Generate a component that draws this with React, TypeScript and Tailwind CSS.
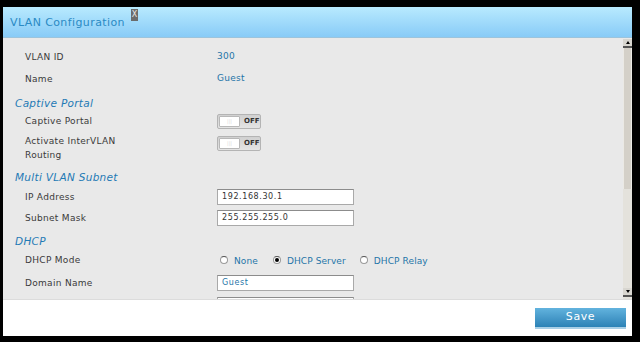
import React from "react";

const font = { fontFamily: '"DejaVu Sans", Verdana, sans-serif' };

const Label: React.FC<{ children: React.ReactNode }> = ({ children }) => (
  <div className="w-[192px] shrink-0 text-[9px] leading-[14px] tracking-[0.3px] text-[#3a3a3a]">{children}</div>
);

const Heading: React.FC<{ children: React.ReactNode; cls: string }> = ({ children, cls }) => (
  <div className={`${cls} flex items-center pl-[12px] text-[10.5px] italic tracking-[0.3px] text-[#1f7ab5]`}>{children}</div>
);

const Toggle: React.FC = () => (
  <div className="flex h-[15px] w-[44px] items-center rounded-[2px] border border-[#b4b4b4] bg-gradient-to-b from-[#d0d0d0] to-[#e4e4e4]">
    <div className="ml-[1px] flex h-[11px] w-[21px] items-center justify-center rounded-[1px] border border-[#b8b8b8] bg-white">
      <span className="text-[5px] leading-none text-[#d8d8d8]">|||</span>
    </div>
    <span className="ml-[4px] text-[7px] font-bold leading-none text-[#333]">OFF</span>
  </div>
);

const Input: React.FC<{ value?: string; blue?: boolean }> = ({ value, blue }) => (
  <div
    className={`flex h-[16px] w-[137px] items-center border border-[#a9a9a9] border-t-[#8c8c8c] bg-white pl-[4px] text-[8px] tracking-[0.6px] ${
      blue ? "text-[#1f75a8]" : "text-[#333]"
    }`}
  >
    {value}
  </div>
);

const Radio: React.FC<{ checked?: boolean; label: string }> = ({ checked, label }) => (
  <div className="flex items-center">
    <div className="flex h-[8px] w-[8px] items-center justify-center rounded-full border border-[#9a9a9a] border-t-[#555] bg-white">
      {checked && <div className="h-[4px] w-[4px] rounded-full bg-black" />}
    </div>
    <span className="ml-[6px] mt-[3px] text-[9px] tracking-[0.1px] text-[#1f75a8]">{label}</span>
  </div>
);

export default function App() {
  return (
    <div className="h-[342px] w-[640px] bg-black pl-[3px] pt-[7px]" style={font}>
      <div className="flex h-[329px] w-[629px] flex-col bg-white">
        {/* header */}
        <div className="flex h-[31px] shrink-0 items-start border-b border-[#9cc4dc] bg-gradient-to-b from-[#b8eafe] to-[#88cbf7]">
          <span className="ml-[7px] mt-[8px] text-[11px] tracking-[0.4px] text-[#2a8ac4]">VLAN Configuration</span>
          <span className="ml-[6px] mt-[2px] flex h-[12px] w-[7px] items-center justify-center bg-[#6b6b6b] text-[8px] leading-none text-[#e8e8e8]">
            X
          </span>
        </div>

        {/* body */}
        <div className="flex h-[262px] shrink-0 border-b border-[#dcdcdc] bg-[#e9e9e9]">
          <div className="flex-1 overflow-hidden pt-[8px]">
            <div className="flex h-[22px] items-center pl-[22px]">
              <Label>VLAN ID</Label>
              <span className="text-[9px] tracking-[0.3px] text-[#1f75a8]">300</span>
            </div>
            <div className="flex h-[22px] items-center pl-[22px]">
              <Label>Name</Label>
              <span className="text-[9px] tracking-[0.3px] text-[#1f75a8]">Guest</span>
            </div>
            <Heading cls="h-[24px] pt-[3px]">Captive Portal</Heading>
            <div className="flex h-[14px] items-center pl-[22px]">
              <Label>Captive Portal</Label>
              <Toggle />
            </div>
            <div className="mt-[6px] flex items-start pl-[22px]">
              <Label>
                Activate InterVLAN
                <br />
                Routing
              </Label>
              <div className="mt-[2px]">
                <Toggle />
              </div>
            </div>
            <Heading cls="h-[26px] pt-[6px]">Multi VLAN Subnet</Heading>
            <div className="flex h-[18px] items-center pl-[22px]">
              <Label>IP Address</Label>
              <Input value="192.168.30.1" />
            </div>
            <div className="mt-[3px] flex h-[18px] items-center pl-[22px]">
              <Label>Subnet Mask</Label>
              <Input value="255.255.255.0" />
            </div>
            <Heading cls="h-[25px] pt-[5px]">DHCP</Heading>
            <div className="flex h-[16px] items-center pl-[22px]">
              <Label>DHCP Mode</Label>
              <div className="ml-[3px] flex items-center">
                <Radio label="None" />
                <div className="w-[15px]" />
                <Radio checked label="DHCP Server" />
                <div className="w-[14px]" />
                <Radio label="DHCP Relay" />
              </div>
            </div>
            <div className="mt-[6px] flex h-[18px] items-center pl-[22px]">
              <Label>Domain Name</Label>
              <Input value="Guest" blue />
            </div>
            <div className="mt-[4px] flex h-[18px] items-center pl-[22px]">
              <Label>&nbsp;</Label>
              <Input />
            </div>
          </div>

          {/* scrollbar */}
          <div className="mt-[1px] flex w-[9px] shrink-0 flex-col bg-[#e4e2dc]">
            <div className="flex h-[9px] items-center justify-center border-b-2 border-[#555] bg-[#d8d6d0]">
              <div className="h-0 w-0 border-x-[2px] border-b-[3px] border-x-transparent border-b-black" />
            </div>
            <div className="h-[141px] border-x border-[#ebe9e4] bg-[#d4d0c8]" />
            <div className="flex-1" />
            <div className="mb-[2px] flex h-[9px] items-center justify-center border-b-2 border-[#555] bg-[#d8d6d0]">
              <div className="h-0 w-0 border-x-[2px] border-t-[3px] border-x-transparent border-t-black" />
            </div>
          </div>
        </div>

        {/* footer */}
        <div className="flex flex-1 items-start justify-end bg-white pr-[6px] pt-[8px]">
          <button className="flex h-[21px] w-[91px] items-center justify-center border-b-2 border-[#a8cfe6] bg-gradient-to-b from-[#62b3de] to-[#2b82b6] text-[11px] tracking-[0.6px] text-white">
            Save
          </button>
        </div>
      </div>
    </div>
  );
}
